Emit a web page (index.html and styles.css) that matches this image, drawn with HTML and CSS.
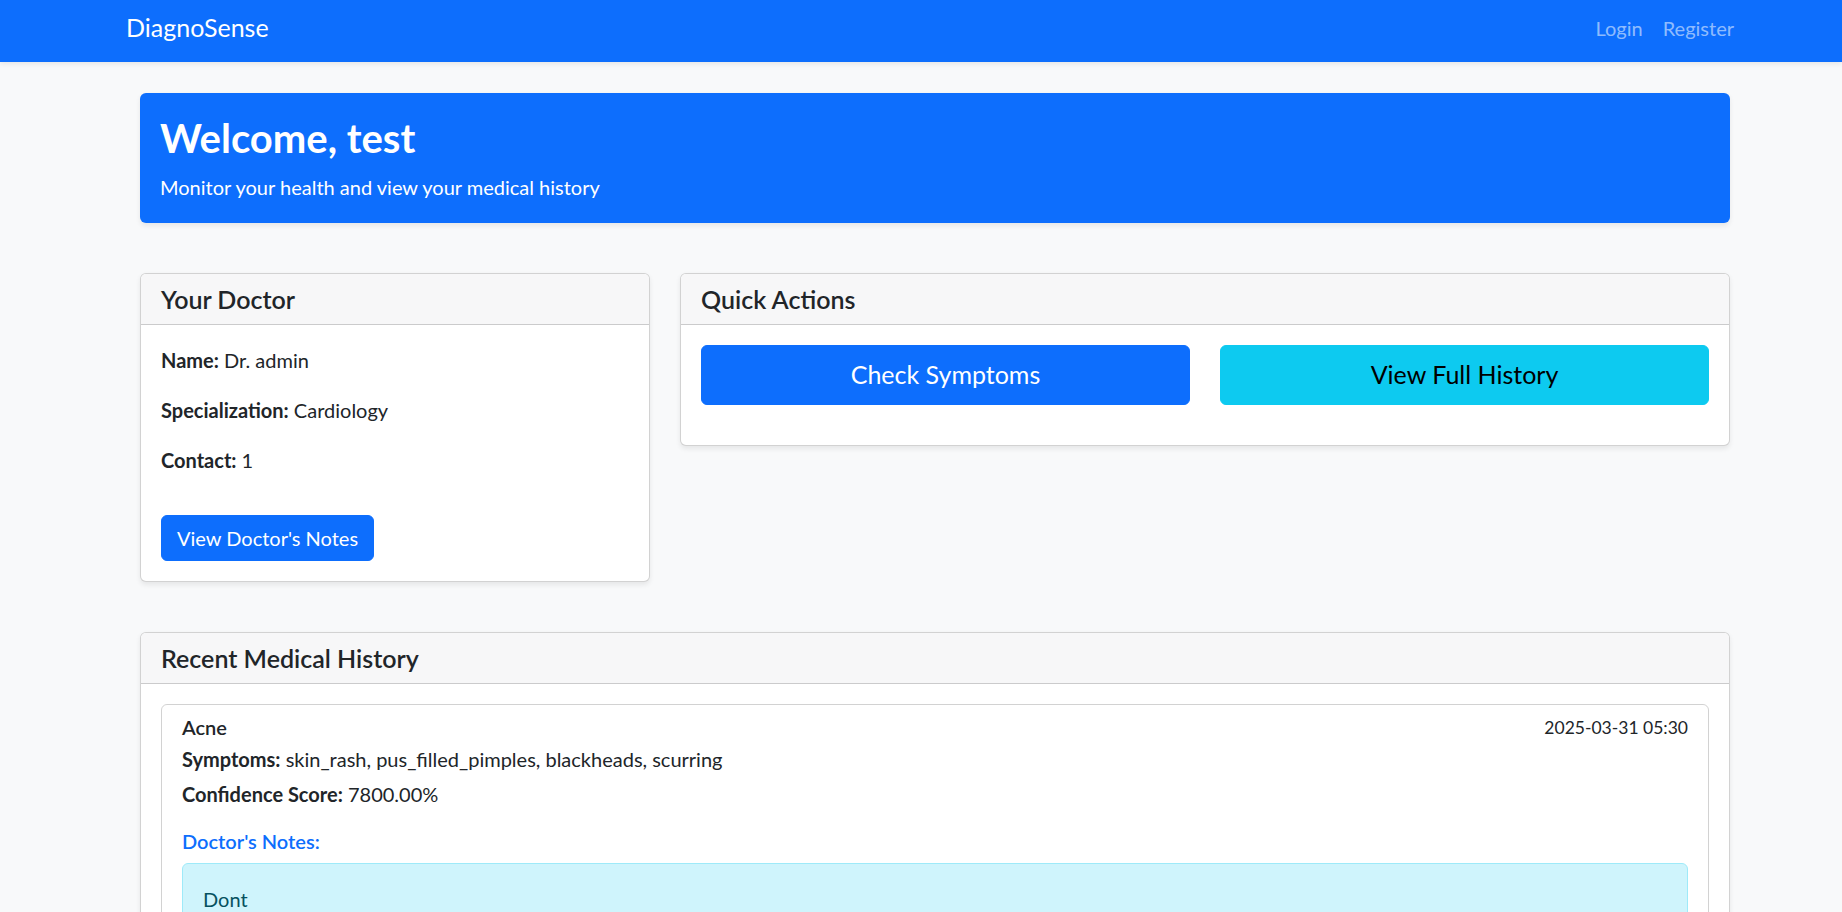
FILE: index.html
```html
<!DOCTYPE html>
<html lang="en">
<head>
<meta charset="utf-8">
<title>DiagnoSense - Dashboard</title>
<link rel="stylesheet" href="styles.css">
</head>
<body>
<nav class="navbar">
  <a class="brand" href="#">DiagnoSense</a>
  <ul class="nav-links">
    <li><a href="#">Login</a></li>
    <li><a href="#">Register</a></li>
  </ul>
</nav>

<main class="container">
  <section class="hero">
    <h1>Welcome, test</h1>
    <p>Monitor your health and view your medical history</p>
  </section>

  <div class="top-row">
    <div class="card">
      <div class="card-header"><h5>Your Doctor</h5></div>
      <div class="card-body">
        <p><strong>Name:</strong> Dr. admin</p>
        <p><strong>Specialization:</strong> Cardiology</p>
        <p><strong>Contact:</strong> 1</p>
        <div class="btn-wrap"><a class="btn btn-primary" href="#">View Doctor's Notes</a></div>
      </div>
    </div>

    <div class="card">
      <div class="card-header"><h5>Quick Actions</h5></div>
      <div class="card-body">
        <div class="actions">
          <a class="btn btn-lg btn-primary" href="#">Check Symptoms</a>
          <a class="btn btn-lg btn-info" href="#">View Full History</a>
        </div>
      </div>
    </div>
  </div>

  <div class="card history-card">
    <div class="card-header"><h5>Recent Medical History</h5></div>
    <div class="card-body">
      <div class="list-group">
        <div class="list-item">
          <div class="item-top">
            <h6>Acne</h6>
            <small>2025-03-31 05:30</small>
          </div>
          <p class="mb1"><strong>Symptoms:</strong> skin_rash, pus_filled_pimples, blackheads, scurring</p>
          <p class="mb1"><strong>Confidence Score:</strong> 7800.00%</p>
          <div class="notes">
            <h6 class="notes-title">Doctor's Notes:</h6>
            <div class="alert-info">
              <p>Dont</p>
            </div>
          </div>
        </div>
      </div>
    </div>
  </div>
</main>
</body>
</html>
```
FILE: styles.css
```css
html {
  scrollbar-width: none;
}

* {
  box-sizing: border-box;
}

body {
  margin: 0;
  background: #f8f9fa;
  color: #212529;
  font-family: Lato, "Open Sans", sans-serif;
  font-size: 20px;
  line-height: 1.5;
}

a {
  text-decoration: none;
}

h1, h5, h6, p {
  margin: 0;
}

/* Navbar */
.navbar {
  height: 62px;
  background: #0d6efd;
  display: flex;
  align-items: center;
  justify-content: space-between;
  padding: 0 98px 6px 126px;
  box-shadow: 0 2px 5px rgba(0, 0, 0, 0.08);
}

.brand {
  color: #fff;
  font-size: 25px;
  line-height: 37.5px;
}

.nav-links {
  list-style: none;
  margin: 0;
  padding: 0;
  display: flex;
}

.nav-links a {
  display: block;
  padding: 0 10px;
  color: rgba(255, 255, 255, 0.55);
  font-size: 20px;
  line-height: 30px;
}

/* Layout */
.container {
  margin: 0 112px 0 140px;
  padding-bottom: 40px;
}

.hero {
  margin-top: 31px;
  background: #0d6efd;
  color: #fff;
  border-radius: 6px;
  padding: 21px 20px;
  box-shadow: 0 2.5px 5px rgba(0, 0, 0, 0.075);
}

.hero h1 {
  font-size: 40px;
  line-height: 48px;
  font-weight: 700;
  margin-bottom: 10px;
}

.hero p {
  font-size: 20px;
  line-height: 30px;
}

.top-row {
  margin-top: 50px;
  display: grid;
  grid-template-columns: calc((100% + 30px) / 3 - 30px) 1fr;
  gap: 30px;
  align-items: start;
}

/* Cards */
.card {
  background: #fff;
  border: 1px solid rgba(0, 0, 0, 0.175);
  border-radius: 6px;
  box-shadow: 0 2.5px 5px rgba(0, 0, 0, 0.075);
  overflow: hidden;
}

.card-header {
  background: #f7f7f8;
  padding: 10px 20px;
  border-bottom: 1px solid rgba(0, 0, 0, 0.175);
}

.card-header h5 {
  font-size: 25px;
  line-height: 30px;
  font-weight: 600;
}

.card-body {
  padding: 20px;
}

.card-body > p {
  margin-bottom: 20px;
}

strong {
  font-weight: 700;
}

.btn-wrap {
  margin-top: 40px;
}

.btn {
  display: inline-block;
  border: 1px solid transparent;
  border-radius: 6px;
  font-size: 20px;
  line-height: 30px;
  padding: 7px 15px;
  text-align: center;
}

.btn-primary {
  background: #0d6efd;
  border-color: #0d6efd;
  color: #fff;
}

.btn-info {
  background: #0dcaf0;
  border-color: #0dcaf0;
  color: #000;
}

.btn-lg {
  font-size: 25px;
  line-height: 37.5px;
  padding: 10px 20px;
}

.actions {
  display: grid;
  grid-template-columns: 1fr 1fr;
  gap: 30px;
  margin-bottom: 20px;
}

.actions .btn {
  display: block;
}

/* History */
.history-card {
  margin-top: 50px;
}

.list-item {
  border: 1px solid rgba(0, 0, 0, 0.175);
  border-radius: 6px;
  padding: 10px 20px;
}

.item-top {
  display: flex;
  justify-content: space-between;
}

.item-top h6 {
  font-size: 20px;
  line-height: 24px;
  font-weight: 600;
  margin-bottom: 5px;
}

.item-top small {
  font-size: 17.5px;
  line-height: 26.25px;
}

.mb1 {
  margin-bottom: 5px;
}

.notes {
  margin-top: 20px;
}

.notes-title {
  font-size: 20px;
  line-height: 24px;
  font-weight: 600;
  color: #0d6efd;
  margin-bottom: 10px;
}

.alert-info {
  background: #cff4fc;
  border: 1px solid #9eeaf9;
  color: #055160;
  border-radius: 6px;
  padding: 20px;
}
```
